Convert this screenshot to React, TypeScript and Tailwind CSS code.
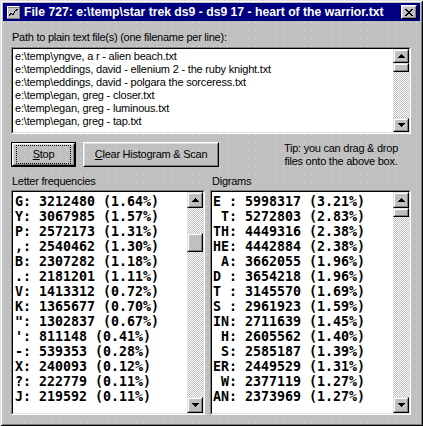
import React from "react";

const files = [
  "e:\\temp\\yngve, a r - alien beach.txt",
  "e:\\temp\\eddings, david - ellenium 2 - the ruby knight.txt",
  "e:\\temp\\eddings, david - polgara the sorceress.txt",
  "e:\\temp\\egan, greg - closer.txt",
  "e:\\temp\\egan, greg - luminous.txt",
  "e:\\temp\\egan, greg - tap.txt",
];

const letters = [
  "G: 3212480 (1.64%)",
  "Y: 3067985 (1.57%)",
  "P: 2572173 (1.31%)",
  ",: 2540462 (1.30%)",
  "B: 2307282 (1.18%)",
  ".: 2181201 (1.11%)",
  "V: 1413312 (0.72%)",
  "K: 1365677 (0.70%)",
  '": 1302837 (0.67%)',
  "': 811148 (0.41%)",
  "-: 539353 (0.28%)",
  "X: 240093 (0.12%)",
  "?: 222779 (0.11%)",
  "J: 219592 (0.11%)",
];

const digrams = [
  "E : 5998317 (3.21%)",
  " T: 5272803 (2.83%)",
  "TH: 4449316 (2.38%)",
  "HE: 4442884 (2.38%)",
  " A: 3662055 (1.96%)",
  "D : 3654218 (1.96%)",
  "T : 3145570 (1.69%)",
  "S : 2961923 (1.59%)",
  "IN: 2711639 (1.45%)",
  " H: 2605562 (1.40%)",
  " S: 2585187 (1.39%)",
  "ER: 2449529 (1.31%)",
  " W: 2377119 (1.27%)",
  "AN: 2373969 (1.27%)",
];

const UpArrow = () => (
  <svg width="7" height="4" viewBox="0 0 7 4" shapeRendering="crispEdges">
    <path d="M3 0h1v1h1v1h1v1h1v1H0V3h1V2h1V1h1z" fill="#000" />
  </svg>
);

const DownArrow = () => (
  <svg width="7" height="4" viewBox="0 0 7 4" shapeRendering="crispEdges">
    <path d="M0 0h7v1h-1v1h-1v1h-1v1h-1V3h-1V2h-1V1H0z" fill="#000" />
  </svg>
);

// raised 3d box used for scroll arrows and thumbs
const Raised = ({ className, children }: { className: string; children?: React.ReactNode }) => (
  <div className={"shrink-0 border border-t-[#dfdfdf] border-l-[#dfdfdf] border-r-black border-b-black " + className}>
    <div className="flex h-full w-full items-center justify-center border border-t-white border-l-white border-r-[#808080] border-b-[#808080] bg-[#c0c0c0]">
      {children}
    </div>
  </div>
);

const ScrollBar = ({ arrow, gap, thumb }: { arrow: string; gap: string; thumb: string }) => (
  <div className="flex w-[16px] shrink-0 flex-col">
    <Raised className={arrow}>
      <UpArrow />
    </Raised>
    <div className="flex flex-1 flex-col bg-[conic-gradient(#ffffff_25%,#c0c0c0_0_50%,#ffffff_0_75%,#c0c0c0_0)] bg-[length:2px_2px]">
      <div className={gap} />
      <Raised className={thumb} />
    </div>
    <Raised className={arrow}>
      <DownArrow />
    </Raised>
  </div>
);

const Sunken = ({ className, children }: { className: string; children: React.ReactNode }) => (
  <div className={"border border-t-[#808080] border-l-[#808080] border-r-white border-b-white " + className}>
    <div className="flex h-full border border-t-black border-l-black border-r-[#dfdfdf] border-b-[#dfdfdf] bg-white">
      {children}
    </div>
  </div>
);

const TitleIcon = () => (
  <svg width="16" height="16" viewBox="0 0 16 16" shapeRendering="crispEdges">
    <rect x="2" y="2" width="13" height="13" fill="#808080" />
    <rect x="2" y="2" width="12" height="12" fill="#ffffff" />
    <rect x="3" y="3" width="11" height="11" fill="#c0c0c0" />
    <rect x="3" y="3" width="11" height="1" fill="#808080" />
    <path d="M4 12 L6 9 L8 11 L10 7 L13 5" fill="none" stroke="#000" strokeWidth="1" />
  </svg>
);

const CloseGlyph = () => (
  <svg width="8" height="7" viewBox="0 0 8 7" shapeRendering="crispEdges">
    <path
      d="M0 0h2v1h-2zM6 0h2v1h-2zM1 1h2v1h-2zM5 1h2v1h-2zM2 2h4v1h-4zM3 3h2v1h-2zM2 4h4v1h-4zM1 5h2v1h-2zM5 5h2v1h-2zM0 6h2v1h-2zM6 6h2v1h-2z"
      fill="#000"
    />
  </svg>
);

const App = () => {
  return (
    <div className="h-[426px] w-[423px] bg-[#c0c0c0] p-[3px] font-['Liberation_Sans',Arial,sans-serif] text-black shadow-[inset_1px_1px_0_#dfdfdf,inset_-1px_-1px_0_#000,inset_2px_2px_0_#fff,inset_-2px_-2px_0_#808080]">
      {/* title bar */}
      <div className="flex h-[18px] items-center bg-[#000080] pl-[2px] pr-[3px]">
        <TitleIcon />
        <span className="ml-[3px] whitespace-nowrap text-[12.2px] leading-[14px] font-bold text-white">
          File 727: e:\temp\star trek ds9 - ds9 17 - heart of the warrior.txt
        </span>
        <div className="ml-auto h-[14px] w-[16px] border border-t-white border-l-white border-r-black border-b-black">
          <div className="flex h-full w-full items-center justify-center border border-t-[#dfdfdf] border-l-[#dfdfdf] border-r-[#808080] border-b-[#808080] bg-[#c0c0c0]">
            <CloseGlyph />
          </div>
        </div>
      </div>

      {/* dialog body */}
      <div className="mt-[1px] flex h-[401px] flex-col bg-[#e4e4e4] bg-[linear-gradient(to_right,transparent_1px,#c0c0c0_1px),linear-gradient(to_bottom,transparent_1px,#c0c0c0_1px)] bg-[length:7px_8px] pt-[9px] pr-[9px] pb-[8px] pl-[8px] text-[11px] leading-[13px] tracking-[-0.2px]">
        <div className="h-[13px] pl-[1px] tracking-[-0.25px]">Path to plain text file(s) (one filename per line):</div>

        <Sunken className="mt-[3px] h-[87px]">
          <div className="flex-1 pt-[1px] pl-[2px] whitespace-pre">
            {files.map((f) => (
              <div key={f} className="h-[13px]">
                {f}
              </div>
            ))}
          </div>
          <ScrollBar arrow="h-[14px]" gap="h-0" thumb="h-[9px]" />
        </Sunken>

        <div className="mt-[8px] flex h-[25px] tracking-[-0.25px]">
          <button className="h-[25px] w-[65px] border border-black p-0">
            <div className="h-full border border-t-white border-l-white border-r-black border-b-black">
              <div className="flex h-full items-center justify-center border border-t-[#dfdfdf] border-l-[#dfdfdf] border-r-[#808080] border-b-[#808080] px-[2px]">
                <div className="flex h-full w-full items-center justify-center border border-dotted border-black">
                  <span>
                    <u>S</u>top
                  </span>
                </div>
              </div>
            </div>
          </button>
          <button className="ml-[7px] h-[25px] w-[136px] border border-t-white border-l-white border-r-black border-b-black p-0">
            <div className="flex h-full items-center justify-center border border-t-[#dfdfdf] border-l-[#dfdfdf] border-r-[#808080] border-b-[#808080]">
              <span>
                <u>C</u>lear Histogram &amp; Scan
              </span>
            </div>
          </button>
          <div className="ml-auto mr-[6px] w-[128px] text-center">
            <div>Tip: you can drag &amp; drop</div>
            <div>files onto the above box.</div>
          </div>
        </div>

        <div className="mt-[8px] flex h-[13px] tracking-[-0.25px]">
          <div className="w-[199px] pl-[1px]">Letter frequencies</div>
          <div className="pl-[2px]">Digrams</div>
        </div>

        <div className="mt-[2px] flex h-[225px] gap-[5px] font-['DejaVu_Sans_Mono',monospace] text-[13.3px] leading-[15px] font-bold tracking-normal">
          <Sunken className="h-full w-[194px]">
            <div className="flex-1 pt-[2px] pl-[2px] whitespace-pre">
              {letters.map((l) => (
                <div key={l} className="h-[15px]">
                  {l}
                </div>
              ))}
            </div>
            <ScrollBar arrow="h-[16px]" gap="h-[25px]" thumb="h-[19px]" />
          </Sunken>
          <Sunken className="h-full w-[201px]">
            <div className="flex-1 pt-[2px] pl-[1px] whitespace-pre">
              {digrams.map((d) => (
                <div key={d} className="h-[15px]">
                  {d}
                </div>
              ))}
            </div>
            <ScrollBar arrow="h-[16px]" gap="h-0" thumb="h-[9px]" />
          </Sunken>
        </div>
      </div>
    </div>
  );
};

export default App;
